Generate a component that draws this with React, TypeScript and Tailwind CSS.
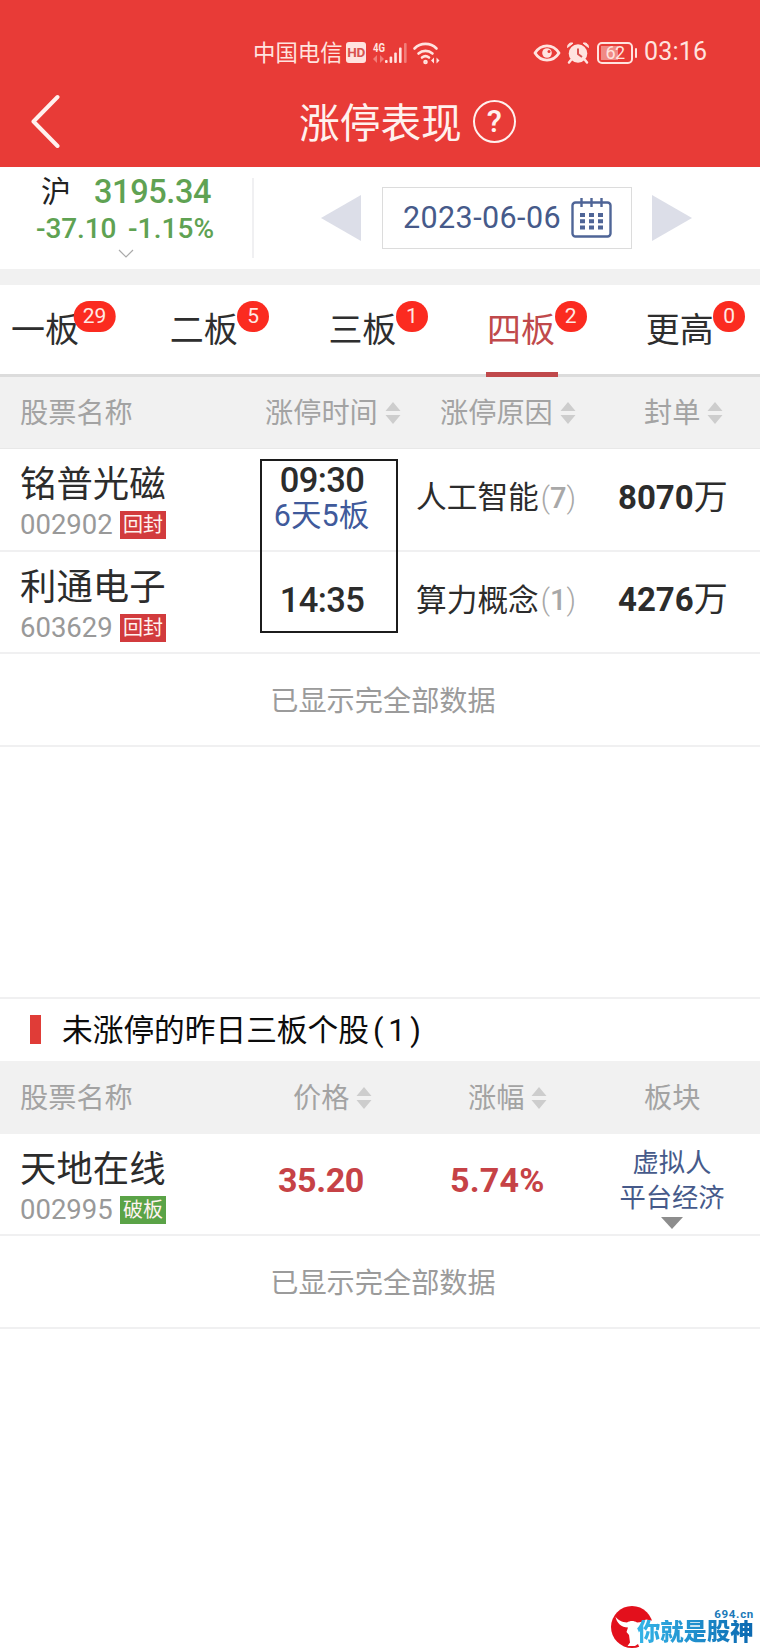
import { ReactNode } from "react";
import clsx from "clsx";

type Tab = { label: string; count: number };
type Tag = { text: string; color: "red" | "green" };

const TABS: Tab[] = [
  { label: "一板", count: 29 },
  { label: "二板", count: 5 },
  { label: "三板", count: 1 },
  { label: "四板", count: 2 },
  { label: "更高", count: 0 },
];

const ACTIVE_TAB = "四板";

const LIMIT_UP = [
  { name: "铭普光磁", code: "002902", time: "09:30", streak: "6天5板", reason: "人工智能", count: 7, amount: "8070" },
  { name: "利通电子", code: "603629", time: "14:35", streak: "", reason: "算力概念", count: 1, amount: "4276" },
];

const TAG_COLOR: Record<Tag["color"], string> = {
  red: "bg-[#d23b3d]",
  green: "bg-[#5aa347]",
};

function StatusBar() {
  return (
    <div className="flex h-[105px] items-center pl-[253px] text-[#ffe3df]">
      <span className="w-[93px] text-[22.4px] leading-[22px] whitespace-nowrap">中国电信</span>
      <span className="flex h-[21px] w-[20px] items-center justify-center rounded-[3px] bg-[#ffe3df] text-[13.5px] font-bold tracking-[-0.5px] text-[#d8524f]">
        HD
      </span>
      <svg className="ml-[6px]" width="36" height="24" viewBox="0 0 36 24" fill="currentColor">
        <text x="1" y="11" fontSize="13.5" fontWeight="700" fontFamily="Roboto" textLength="12" lengthAdjust="spacingAndGlyphs">
          4G
        </text>
        <path d="M5 14v8l-4-4zM8 14v8l4-4z" opacity="0.4" />
        <rect x="13" y="19" width="2.6" height="3" rx="1" />
        <rect x="17.6" y="15.5" width="2.6" height="6.5" rx="1" />
        <rect x="22.2" y="11.5" width="2.6" height="10.5" rx="1" />
        <rect x="27" y="6.5" width="2.6" height="15.5" rx="1" />
        <rect x="32" y="2" width="2.6" height="20" rx="1" opacity="0.4" />
      </svg>
      <svg className="ml-[4px]" width="29" height="24" viewBox="0 0 29 24" fill="none" stroke="currentColor" strokeWidth="2.6" strokeLinecap="round">
        <path d="M2.5 7.5a15.5 15.500 0 0 1 22 0M6.5 12.5a10.5 10.5 0 0 1 14 0M10 16.5a5.5 5.5 0 0 1 7 0" />
        <circle cx="13.5" cy="21" r="1" />
        <path d="M22 16.500v6l-3-3zM24.500 16.500v6l3-3z" fill="currentColor" stroke="none" />
      </svg>

      <svg className="ml-[92px]" width="28" height="22" viewBox="0 0 28 22" fill="none" stroke="currentColor" strokeWidth="2.8">
        <path d="M2 11C8 1.5 20 1.5 26 11C20 20.5 8 20.5 2 11z" strokeLinejoin="round" />
        <circle cx="14" cy="11" r="4.8" fill="currentColor" stroke="none" />
        <circle cx="16" cy="9.5" r="1.5" fill="#e83b37" stroke="none" />
      </svg>
      <svg className="ml-[5px]" width="24" height="24" viewBox="0 0 24 24" fill="currentColor">
        <circle cx="12" cy="12.5" r="9.3" />
        <path d="M1.500 6.5C1.5 3 4 1.2 7 2.200zM22.5 6.5C22.5 3 20 1.200 17 2.2z" stroke="currentColor" />
        <path d="M5 19l-2 2.5M19 19l2 2.5" stroke="currentColor" strokeWidth="2.5" strokeLinecap="round" />
        <path d="M12 7.5v5.5l4 3" fill="none" stroke="#d8524f" strokeWidth="2" />
      </svg>
      <span className="ml-[7px] flex h-[22px] w-[36px] rounded-[5px] border-2 border-current p-[2px]">
        <span className="relative h-full w-[17px] bg-[#f08a85]">
          <span className="absolute top-0 left-0 w-[28px] text-center text-[18px] leading-[14px] tracking-[-0.5px]">62</span>
        </span>
      </span>
      <span className="ml-[2px] h-[10px] w-[2px] rounded-sm bg-current" />
      <span className="-mt-[2px] ml-[7px] text-[25px] tracking-[0.2px]">03:16</span>
    </div>
  );
}

function TitleBar() {
  return (
    <header className="h-[167px] bg-[#e83b37]">
      <StatusBar />
      <div className="-mt-[14px] flex h-[60px] items-center pl-[29px] text-[#fff1ee]">
        <svg width="34" height="54" viewBox="0 0 34 54" fill="none" stroke="currentColor" strokeWidth="4" strokeLinecap="round" strokeLinejoin="round">
          <path d="M28.5 3L4.5 27.5L28.5 52" />
        </svg>
        <h1 className="mt-[5px] ml-[236px] text-[40.7px] leading-[46px] whitespace-nowrap">涨停表现</h1>
        <span className="ml-[11px] flex size-[43px] items-center justify-center rounded-full border-2 border-current text-[31px] leading-none font-medium">
          ?
        </span>
      </div>
    </header>
  );
}

function CalendarIcon() {
  return (
    <svg width="42" height="42" viewBox="0 0 42 42" fill="none" stroke="#4f6597" strokeWidth="2.4">
      <rect x="1.5" y="5.5" width="38" height="34" rx="3" />
      <path d="M10.5 1v9M20.5 1v9M30.5 1v9" />
      <path d="M9 18h5M18 18h5M27 18h5M9 24.3h5M18 24.3h5M27 24.3h5M9 30.5h5M18 30.5h5M27 30.5h5" strokeWidth="4" />
    </svg>
  );
}

function MarketBar() {
  return (
    <div className="flex h-[102px]">
      <div className="mt-[11px] h-[80px] w-[254px] border-r-2 border-[#f0f0f2]">
        <div className="flex h-[28px] items-center pl-[41px]">
          <span className="w-[53px] text-[30px] leading-[30px] text-[#222]">沪</span>
          <span className="text-[32.5px] leading-[28px] font-medium tracking-[-0.4px] text-[#5fa253]">3195.34</span>
        </div>
        <div className="mt-[8px] flex h-[30px] items-center pl-[36px] text-[28px] font-medium text-[#5fa253]">
          <span className="w-[92px] tracking-[-0.1px]">-37.10</span>
          <span className="tracking-[0.100px]">-1.15%</span>
        </div>
        <svg className="mt-[5px] ml-[118px]" width="16" height="9" viewBox="0 0 16 9" fill="none" stroke="#aaa" strokeWidth="1.2">
          <path d="M1 1l7 7l7-7" />
        </svg>
      </div>
      <div className="flex flex-1 items-center pl-[67px]">
        <svg width="40" height="46" viewBox="0 0 40 46" fill="#dcdee8">
          <path d="M40 0v46L0 23z" />
        </svg>
        <div className="ml-[21px] flex h-[62px] w-[250px] items-center border border-[#dcdcdc] pl-[20px]">
          <span className="w-[168px] text-[30.5px] tracking-[0.4px] whitespace-nowrap text-[#465a8a]">2023-06-06</span>
          <CalendarIcon />
        </div>
        <svg className="ml-[20px]" width="40" height="46" viewBox="0 0 40 46" fill="#dcdee8">
          <path d="M0 0v46L40 23z" />
        </svg>
      </div>
    </div>
  );
}

function Tabs() {
  return (
    <nav className="flex h-[92px] border-b-3 border-[#dcdcdc] pl-[10px]">
      {TABS.map((tab) => {
        const active = tab.label === ACTIVE_TAB;
        return (
          <div key={tab.label} className="relative w-[158.7px] shrink-0 pt-[27px]">
            <span className={clsx("pl-[1px] text-[34px] leading-[36px]", active ? "text-[#c0494b]" : "text-[#2e2e2e]")}>
              {tab.label}
            </span>
            <span className="absolute top-[16px] left-[84.5px] flex h-[31px] min-w-[32px] -translate-x-1/2 items-center justify-center rounded-full bg-[#fb2b20] px-[9.5px] text-[21px] leading-none text-[#ffe9e4]">
              {tab.count}
            </span>
            {active && <span className="absolute -bottom-[3px] left-0 h-[5px] w-[72px] bg-[#c0494b]" />}
          </div>
        );
      })}
    </nav>
  );
}

function SortIcon() {
  return (
    <svg className="mb-[2px] ml-[7px]" width="16" height="22" viewBox="0 0 16 22" fill="#cdcdcd">
      <path d="M8 0l7.5 9h-15zM8 22l7.5-9h-15z" />
    </svg>
  );
}

function HeadCell({ className, sort, children }: { className: string; sort?: boolean; children: ReactNode }) {
  return (
    <div className={clsx("flex items-center pt-[3px] text-[28.2px] leading-[28px] whitespace-nowrap text-[#a3a3a3]", className)}>
      {children}
      {sort && <SortIcon />}
    </div>
  );
}

function StockName({ name, code, tag }: { name: string; code: string; tag: Tag }) {
  return (
    <div className="w-[260px] shrink-0 pt-[16px] pl-[20px]">
      <div className="text-[36.4px] leading-[40px] text-[#2c2c2c]">{name}</div>
      <div className="mt-[6px] flex h-[28px] items-center">
        <span className="w-[100px] text-[27.5px] text-[#999]">{code}</span>
        <span className={clsx("flex h-[28px] w-[46px] items-center justify-center text-[20px] leading-[24px] text-[#fff3f0]", TAG_COLOR[tag.color])}>
          {tag.text}
        </span>
      </div>
    </div>
  );
}

function EndOfList() {
  return (
    <div className="flex h-[93px] items-center justify-center border-b-2 border-[#f0f0f1] pt-[5px] pl-[6px] text-[28.2px] text-[#9b9b9b]">
      已显示完全部数据
    </div>
  );
}

function LimitUpTable() {
  return (
    <section className="relative">
      <div className="flex h-[72px] border-b border-[#e8e8e8] bg-[#f1f1f1]">
        <HeadCell className="w-[265px] pl-[20px]">股票名称</HeadCell>
        <HeadCell sort className="w-[175px]">涨停时间</HeadCell>
        <HeadCell sort className="w-[204px]">涨停原因</HeadCell>
        <HeadCell sort className="w-[116px]">封单</HeadCell>
      </div>
      {LIMIT_UP.map((row) => (
        <div key={row.code} className="flex h-[102.5px] border-b-2 border-[#f0f0f1]">
          <StockName name={row.name} code={row.code} tag={{ text: "回封", color: "red" }} />
          <div className={clsx("w-[124px] text-center", row.streak ? "pt-[13px]" : "pt-[30px]")}>
            <div className="text-[34.5px] leading-[36px] font-medium tracking-[-0.6px] text-[#2c2c2c]">{row.time}</div>
            {row.streak && (
              <div className="mt-[1px] -ml-[1px] text-[30.5px] leading-[34px] whitespace-nowrap text-[#405a9b]">{row.streak}</div>
            )}
          </div>
          <div className="-mt-[2px] flex w-[234px] items-center pl-[32px] text-[30.7px] whitespace-nowrap text-[#2c2c2c]">
            {row.reason}
            <span className="ml-[2px] text-[29px] font-medium text-[#a8a8a8]">
              <span className="font-light">(</span>
              {row.count}
              <span className="font-light">)</span>
            </span>
          </div>
          <div className="-mt-[4px] flex items-center text-[33px] font-bold whitespace-nowrap text-[#2c2c2c]">
            {row.amount}
            <span className="text-[34px] font-normal">万</span>
          </div>
        </div>
      ))}
      <EndOfList />
      {/* frame around the time column */}
      <div className="absolute top-[82px] left-[260px] h-[174px] w-[138px] border-2 border-[#1c1c1c]" />
    </section>
  );
}

function BrokenTable() {
  return (
    <section className="mt-[249.5px] border-t-2 border-[#f0f0f1]">
      <div className="flex h-[62px] items-center pl-[30px]">
        <span className="h-[29px] w-[11px] bg-[#e03c37]" />
        <h2 className="mt-[4px] ml-[21px] text-[30.7px] whitespace-nowrap text-[#0c0c0c]">
          未涨停的昨日三板个股<span className="ml-[4px] tracking-[4.8px]">(1)</span>
        </h2>
      </div>
      <div className="flex h-[73px] bg-[#f1f1f1]">
        <HeadCell className="w-[293px] pl-[20px]">股票名称</HeadCell>
        <HeadCell sort className="w-[175px]">价格</HeadCell>
        <HeadCell sort className="w-[176px]">涨幅</HeadCell>
        <HeadCell className="w-[116px]">板块</HeadCell>
      </div>
      <div className="flex h-[102.5px] border-b-2 border-[#f0f0f1]">
        <StockName name="天地在线" code="002995" tag={{ text: "破板", color: "green" }} />
        <div className="-mt-[6px] flex w-[190px] items-center pl-[18px] text-[34px] font-bold tracking-[-0.4px] text-[#c64246]">35.20</div>
        <div className="-mt-[6px] flex w-[162px] items-center text-[34px] font-bold tracking-[0.2px] text-[#c64246]">5.74%</div>
        <div className="flex w-[120px] flex-col items-center pt-[12px] text-[26.3px] leading-[35px] whitespace-nowrap text-[#465a8a]">
          <span>虚拟人</span>
          <span>平台经济</span>
          <svg className="mt-[1px]" width="22" height="12" viewBox="0 0 22 12" fill="#8d8d8d">
            <path d="M0 0h22L11 12z" />
          </svg>
        </div>
      </div>
      <EndOfList />
    </section>
  );
}

function SiteLogo() {
  return (
    <div className="mt-auto flex h-[50px] pl-[610px]">
      <svg className="mt-[5px] shrink-0" width="44" height="44" viewBox="0 0 44 44">
        <circle cx="22" cy="22" r="21" fill="#e3101c" />
        <path
          d="M5.500 11.500C8 15.500 12 17 17 17.500C20 15.500 24 15.500 27 17.500C31 17.500 33 16.500 36 14.500L44 16V44H30L28 39L25 41H17.500L20 37.500L19 30L16.500 27L18 22.500C11.500 22.500 6.500 18 5.500 11.500z"
          fill="#fff"
        />
      </svg>
      <div className="-ml-[17px] flex w-[117px] flex-col">
        <span className="mt-[9px] self-end text-[11.5px] leading-[10px] font-bold tracking-[0.7px] text-[#1a79b8]">694.cn</span>
        <span className="mt-[1px] bg-linear-to-r from-[#35b5e8] to-[#0b68b0] bg-clip-text text-[23.3px] leading-[24px] font-black whitespace-nowrap text-transparent">
          你就是股神
        </span>
      </div>
    </div>
  );
}

export default function App() {
  return (
    <div className="flex h-[1650px] w-[760px] flex-col overflow-hidden bg-white font-['Roboto','Noto_Sans_CJK_SC',sans-serif]">
      <TitleBar />
      <MarketBar />
      <div className="h-[16px] shrink-0 bg-[#f1f1f1]" />
      <Tabs />
      <LimitUpTable />
      <BrokenTable />
      <SiteLogo />
    </div>
  );
}
